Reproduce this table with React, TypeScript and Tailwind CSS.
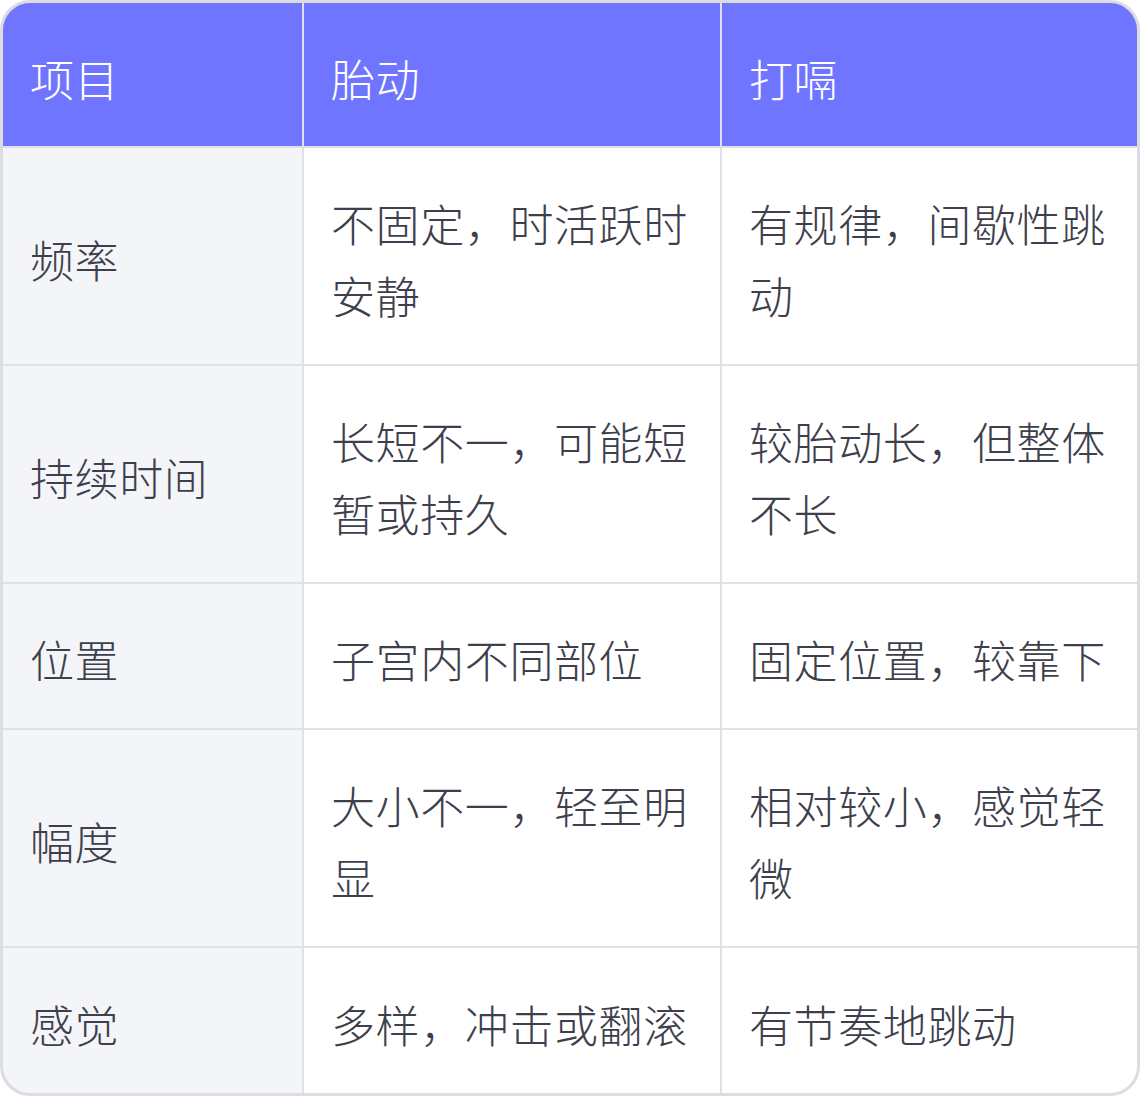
const rows = [
  { label: "频率", a: "不固定，时活跃时安静", b: "有规律，间歇性跳动" },
  { label: "持续时间", a: "长短不一，可能短暂或持久", b: "较胎动长，但整体不长" },
  { label: "位置", a: "子宫内不同部位", b: "固定位置，较靠下" },
  { label: "幅度", a: "大小不一，轻至明显", b: "相对较小，感觉轻微" },
  { label: "感觉", a: "多样，冲击或翻滚", b: "有节奏地跳动" },
];

export default function App() {
  const cell = "flex items-center pl-[27px] pr-[26px] pt-[6px] leading-[72px]";
  return (
    <div
      className="w-[1140px] h-[1096px] border-[3px] border-[#dcdde3] rounded-[30px] overflow-hidden bg-[#e0e1e6] text-[44px] font-light tracking-[0.6px] text-[#3d404c]"
      style={{ fontFamily: '"Noto Sans CJK SC", "Noto Sans", sans-serif' }}
    >
      <div className="grid h-full grid-cols-[299px_416px_1fr] grid-rows-[143px_216px_216px_144px_216px_1fr] gap-[2px]">
        <div className={`${cell} bg-[#6f75ff] text-white`}>项目</div>
        <div className={`${cell} bg-[#6f75ff] text-white`}>胎动</div>
        <div className={`${cell} bg-[#6f75ff] text-white`}>打嗝</div>
        {rows.map((r) => [
          <div key={r.label + "l"} className={`${cell} bg-[#f4f5f9]`}>{r.label}</div>,
          <div key={r.label + "a"} className={`${cell} bg-white`}>{r.a}</div>,
          <div key={r.label + "b"} className={`${cell} bg-white`}>{r.b}</div>,
        ])}
      </div>
    </div>
  );
}
